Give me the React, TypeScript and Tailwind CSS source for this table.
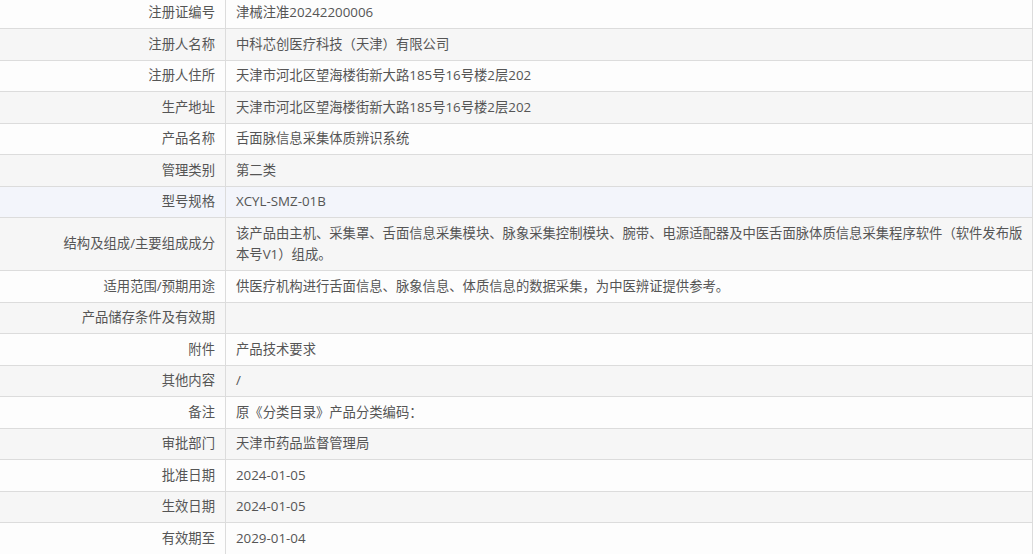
const ROWS: { label: string; value: string }[] = [
  { label: "注册证编号", value: "津械注准20242200006" },
  { label: "注册人名称", value: "中科芯创医疗科技（天津）有限公司" },
  { label: "注册人住所", value: "天津市河北区望海楼街新大路185号16号楼2层202" },
  { label: "生产地址", value: "天津市河北区望海楼街新大路185号16号楼2层202" },
  { label: "产品名称", value: "舌面脉信息采集体质辨识系统" },
  { label: "管理类别", value: "第二类" },
  { label: "型号规格", value: "XCYL-SMZ-01B" },
  {
    label: "结构及组成/主要组成成分",
    value:
      "该产品由主机、采集罩、舌面信息采集模块、脉象采集控制模块、腕带、电源适配器及中医舌面脉体质信息采集程序软件（软件发布版本号V1）组成。",
  },
  { label: "适用范围/预期用途", value: "供医疗机构进行舌面信息、脉象信息、体质信息的数据采集，为中医辨证提供参考。" },
  { label: "产品储存条件及有效期", value: "" },
  { label: "附件", value: "产品技术要求" },
  { label: "其他内容", value: "/" },
  { label: "备注", value: "原《分类目录》产品分类编码：" },
  { label: "审批部门", value: "天津市药品监督管理局" },
  { label: "批准日期", value: "2024-01-05" },
  { label: "生效日期", value: "2024-01-05" },
  { label: "有效期至", value: "2029-01-04" },
];

export default function App() {
  return (
    <div className="h-[554px] w-[1036px] overflow-hidden bg-white font-['Open_Sans','Noto_Sans_CJK_SC',sans-serif] text-[13.33px] text-[#555]">
      <div className="-mt-[2.5px] w-[1033px] border-r border-[#dcdcdc]">
        {ROWS.map((row, i) => {
          const bg = i === 6 ? "bg-[#f3f5fb]" : i % 2 === 0 ? "bg-[#fdfdfd]" : "bg-[#f6f6f6]";
          return (
            <div key={row.label} className={`grid grid-cols-[226px_1fr] border-b border-[#dcdcdc] ${bg}`}>
              <div className="flex items-center justify-end border-r border-[#dcdcdc] py-[4.5px] pr-[10px] leading-[21.5px]">
                {row.label}
              </div>
              <div className="flex min-h-[30.5px] items-center py-[4.5px] pl-[10px] pr-[4px] leading-[21.5px]">
                <span>{row.value}</span>
              </div>
            </div>
          );
        })}
      </div>
    </div>
  );
}
